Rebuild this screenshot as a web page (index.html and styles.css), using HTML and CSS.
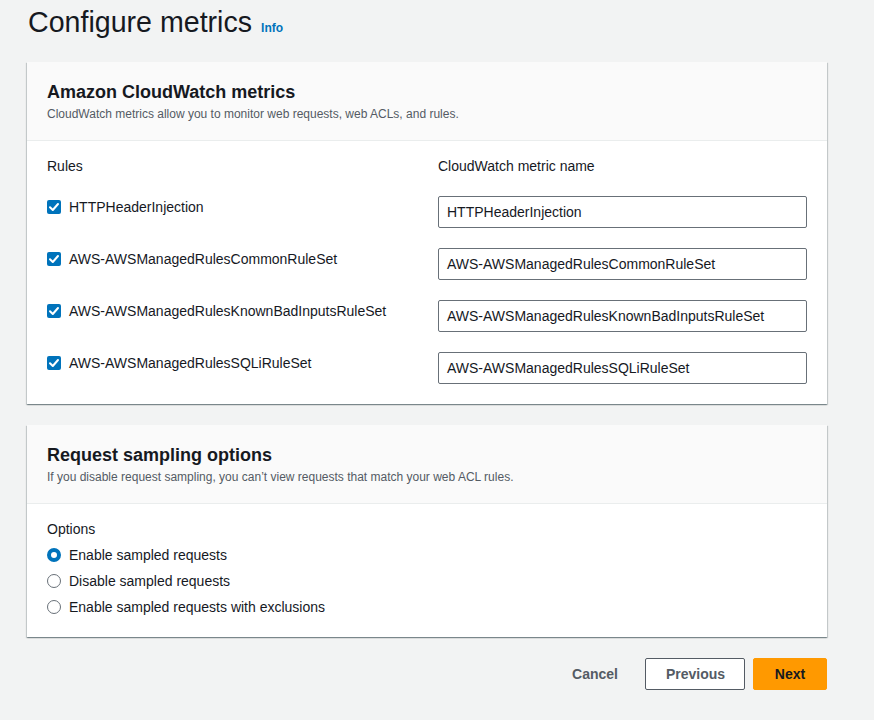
FILE: index.html
```html
<!DOCTYPE html>
<html>
<head>
<meta charset="utf-8">
<link rel="stylesheet" href="styles.css">
</head>
<body>
<div class="page">
  <div class="page-head">
    <h1 class="page-title">Configure metrics</h1>
    <a class="info-link">Info</a>
  </div>

  <section class="panel">
    <header class="panel-header">
      <h2 class="panel-title">Amazon CloudWatch metrics</h2>
      <p class="panel-desc">CloudWatch metrics allow you to monitor web requests, web ACLs, and rules.</p>
    </header>
    <div class="panel-body">
      <div class="metrics-grid">
        <div class="col-label">Rules</div>
        <div class="col-label">CloudWatch metric name</div>

        <label class="rule"><span class="checkbox"><svg viewBox="0 0 14 14" width="14" height="14"><path d="M3 7.2 L5.8 10 L11 4" fill="none" stroke="#fff" stroke-width="2" stroke-linecap="round" stroke-linejoin="round"/></svg></span>HTTPHeaderInjection</label>
        <div class="input">HTTPHeaderInjection</div>

        <label class="rule"><span class="checkbox"><svg viewBox="0 0 14 14" width="14" height="14"><path d="M3 7.2 L5.8 10 L11 4" fill="none" stroke="#fff" stroke-width="2" stroke-linecap="round" stroke-linejoin="round"/></svg></span>AWS-AWSManagedRulesCommonRuleSet</label>
        <div class="input">AWS-AWSManagedRulesCommonRuleSet</div>

        <label class="rule"><span class="checkbox"><svg viewBox="0 0 14 14" width="14" height="14"><path d="M3 7.2 L5.8 10 L11 4" fill="none" stroke="#fff" stroke-width="2" stroke-linecap="round" stroke-linejoin="round"/></svg></span>AWS-AWSManagedRulesKnownBadInputsRuleSet</label>
        <div class="input">AWS-AWSManagedRulesKnownBadInputsRuleSet</div>

        <label class="rule"><span class="checkbox"><svg viewBox="0 0 14 14" width="14" height="14"><path d="M3 7.2 L5.8 10 L11 4" fill="none" stroke="#fff" stroke-width="2" stroke-linecap="round" stroke-linejoin="round"/></svg></span>AWS-AWSManagedRulesSQLiRuleSet</label>
        <div class="input">AWS-AWSManagedRulesSQLiRuleSet</div>
      </div>
    </div>
  </section>

  <section class="panel">
    <header class="panel-header">
      <h2 class="panel-title">Request sampling options</h2>
      <p class="panel-desc">If you disable request sampling, you can’t view requests that match your web ACL rules.</p>
    </header>
    <div class="panel-body options-body">
      <div class="opt-label">Options</div>
      <label class="radio-row"><span class="radio checked"></span>Enable sampled requests</label>
      <label class="radio-row"><span class="radio"></span>Disable sampled requests</label>
      <label class="radio-row"><span class="radio"></span>Enable sampled requests with exclusions</label>
    </div>
  </section>

  <div class="actions">
    <button class="btn btn-link">Cancel</button>
    <button class="btn btn-normal">Previous</button>
    <button class="btn btn-primary">Next</button>
  </div>
</div>
</body>
</html>
```

FILE: styles.css
```css
* { box-sizing: border-box; }
html, body { margin: 0; padding: 0; }
body {
  background: #f2f3f3;
  font-family: "Liberation Sans", Arial, sans-serif;
  color: #16191f;
  font-size: 14px;
}
.page {
  width: 874px;
  padding: 0 47px 0 27px;
}
.page-head {
  display: flex;
  align-items: baseline;
  gap: 9px;
  padding: 4px 0 0 1px;
  height: 62px;
}
.page-title {
  margin: 0;
  font-size: 28.6px;
  font-weight: 400;
  line-height: 36px;
  color: #16191f;
}
.info-link {
  font-size: 12px;
  font-weight: 700;
  color: #0073bb;
}
.panel {
  background: #fff;
  box-shadow: 0 1px 1px 0 rgba(0,28,36,.3), 1px 1px 1px 0 rgba(0,28,36,.15), -1px 1px 1px 0 rgba(0,28,36,.15);
  margin-bottom: 21px;
}
.panel-header {
  background: #fafafa;
  border-bottom: 1px solid #eaeded;
  padding: 19px 20px 18px;
}
.panel-title {
  margin: 0;
  font-size: 18px;
  font-weight: 700;
  line-height: 22px;
  color: #16191f;
}
.panel-desc {
  margin: 3px 0 0;
  font-size: 12px;
  line-height: 16px;
  color: #545b64;
}
.panel-body {
  padding: 15px 20px 20px;
}
.metrics-grid {
  display: grid;
  grid-template-columns: 371px 369px;
  column-gap: 20px;
  row-gap: 20px;
  align-items: start;
}
.col-label {
  font-size: 14px;
  line-height: 20px;
  color: #16191f;
}
.rule {
  display: flex;
  align-items: center;
  gap: 8px;
  line-height: 20px;
  padding-top: 1px;
  color: #16191f;
}
.checkbox {
  width: 14px;
  height: 14px;
  border-radius: 2px;
  background: #0073bb;
  display: inline-flex;
  flex: none;
}
.checkbox svg { display: block; }
.input {
  height: 32px;
  border: 1px solid #687078;
  border-radius: 2px;
  padding: 0 8px;
  line-height: 30px;
  font-size: 14px;
  color: #16191f;
  background: #fff;
}
.options-body {
  padding: 15px 20px 20px;
}
.opt-label {
  line-height: 20px;
  margin-bottom: 6px;
}
.radio-row {
  display: flex;
  align-items: center;
  gap: 8px;
  line-height: 20px;
  margin-bottom: 6px;
}
.radio-row:last-child { margin-bottom: 0; }
.radio {
  width: 14px;
  height: 14px;
  border-radius: 50%;
  border: 1.5px solid #687078;
  background: #fff;
  flex: none;
}
.radio.checked {
  border: 4px solid #0073bb;
}
.actions {
  display: flex;
  justify-content: flex-end;
  align-items: center;
  gap: 8px;
}
.btn {
  font-family: inherit;
  font-size: 14px;
  font-weight: 700;
  height: 32px;
  border-radius: 2px;
  padding: 0 20px;
  cursor: pointer;
}
.btn-link {
  background: transparent;
  border: 1px solid transparent;
  color: #545b64;
  margin-right: 0;
  padding: 0 18px 0 20px;
}
.btn-normal {
  background: #fff;
  border: 1px solid #545b64;
  color: #545b64;
  width: 100px;
}
.btn-primary {
  background: #ff9900;
  border: 1px solid #ff9900;
  color: #16191f;
  width: 74px;
}
```
